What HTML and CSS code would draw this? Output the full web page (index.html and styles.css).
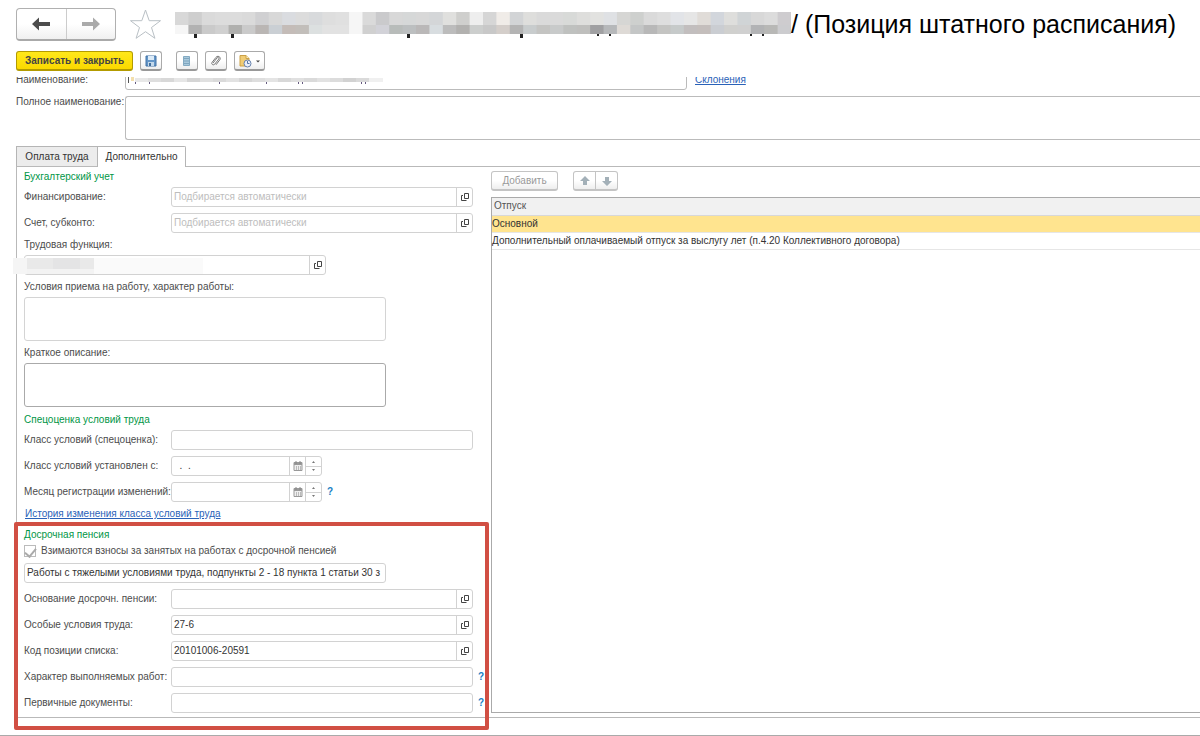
FILE: index.html
```html
<!DOCTYPE html>
<html lang="ru">
<head>
<meta charset="utf-8">
<title>Позиция штатного расписания</title>
<link rel="stylesheet" href="styles.css">
</head>
<body>
<svg class="defs" aria-hidden="true">
  <symbol id="open" viewBox="0 0 10 10"><path d="M4.500 1.500h4v5h-4z" fill="none" stroke="#444"/><path d="M3 3.500H1.500v5h5" fill="none" stroke="#444"/></symbol>
  <symbol id="calendar" viewBox="0 0 10 10"><path d="M1 1.500h8v8H1z" fill="#eee" stroke="#999"/><path d="M1 2h8v2H1z" fill="#999"/><path d="M3 0v3M7 0v3" stroke="#888"/><path d="M3.500 5v4M5.500 5v4M7.500 5v4" stroke="#bbb"/></symbol>
  <symbol id="up" viewBox="0 0 5 3"><path d="M1 3l1.500-2L4 3z" fill="#777"/></symbol>
  <symbol id="down" viewBox="0 0 5 3"><path d="M1 0l1.500 2L4 0z" fill="#777"/></symbol>
</svg>

<header class="header">
  <div class="history">
    <button class="history-btn" type="button" aria-label="Назад"><svg width="20" height="14" viewBox="0 0 20 14"><path d="M1 7l7-6.500v4.500h11v4H8v4.500z" fill="#4c4c4c"/></svg></button>
    <button class="history-btn" type="button" aria-label="Вперед"><svg width="20" height="14" viewBox="0 0 20 14"><path d="M19 7l-7-6.500v4.500H1v4h11v4.500z" fill="#aaa"/></svg></button>
  </div>
  <button class="star" type="button" aria-label="Избранное"><svg width="33" height="32" viewBox="0 0 33 32"><path d="M16.500 2l3.700 10.700H31.500l-9 6.800 3.400 10.800-9.400-6.600-9.400 6.600 3.400-10.800-9-6.800h11.300z" fill="#fff" stroke="#b9c0c5"/></svg></button>
  <svg class="mosaic" id="title-mosaic" width="616" height="30" aria-hidden="true"></svg>
  <h1 class="title">/ (Позиция штатного расписания)</h1>
</header>

<div class="toolbar">
  <button class="btn btn-primary" type="button">Записать и закрыть</button>
  <button class="btn btn-icon" type="button" aria-label="Записать"><svg width="12" height="12" viewBox="0 0 12 12"><path d="M1 1h10v10H1z" fill="#6496c8" stroke="#4272a6"/><path d="M3 1h6v4H3z" fill="#dcebf8"/><path d="M3 7h6v4H3z" fill="#c3d8ea"/><path d="M4 8h2v3H4z" fill="#426f9d"/></svg></button>
  <button class="btn btn-icon gap-before" type="button" aria-label="Список"><svg width="10" height="12" viewBox="0 0 10 12"><path d="M1.500 1.500h6v9h-6z" fill="#a9c9dc" stroke="#83aac2"/><path d="M2 3.500h5M2 6h5M2 8.500h5" stroke="#7fa6bf"/></svg></button>
  <button class="btn btn-icon" type="button" aria-label="Файлы"><svg width="12" height="12" viewBox="0 0 12 12"><path d="M3 8l4-5c1-1.200 2.600 0 1.700 1.200l-4 5c-1.400 1.700-3.900-.2-2.600-1.900L6 2.300C8-.2 11.600 2.400 9.700 5L6 9.800" fill="none" stroke="#777"/></svg></button>
  <button class="btn btn-menu" type="button" aria-label="Создать на основании"><svg width="22" height="14" viewBox="0 0 22 14"><path d="M1 1.500h6l3 3V12H1z" fill="#f1cc74" stroke="#caa047"/><path d="M7 1.500v3h3" fill="#fff2c4" stroke="#caa047"/><circle cx="8.500" cy="9.500" r="3.500" fill="#e9effa" stroke="#6681ac"/><path d="M8.500 7v2.500h2" fill="none" stroke="#5675a5"/><path d="M17 6.500h4l-2 2z" fill="#444"/></svg></button>
</div>

<main>
  <div class="name-row">
    <label class="top-label" for="name">Наименование:</label>
    <div class="name-box">
      <input class="name-input" id="name" type="text">
      <svg class="name-mosaic" id="name-mosaic" width="270" height="9" aria-hidden="true"></svg>
    </div>
    <a class="link" href="#">Склонения</a>
  </div>
  <div class="full-row">
    <label class="top-label" for="full">Полное наименование:</label>
    <textarea class="area area-open" id="full"></textarea>
  </div>

  <div class="tabs" role="tablist">
    <button class="tab" type="button" role="tab" aria-selected="false">Оплата труда</button>
    <button class="tab tab-active" type="button" role="tab" aria-selected="true">Дополнительно</button>
  </div>

  <div class="panel">
    <div class="left">
      <section>
        <h2 class="heading">Бухгалтерский учет</h2>
        <div class="row"><label class="label" for="fin">Финансирование:</label><div class="field"><input id="fin" type="text" placeholder="Подбирается автоматически"><button type="button" aria-label="Открыть"><svg class="ico"><use href="#open"/></svg></button></div></div>
        <div class="row"><label class="label" for="acc">Счет, субконто:</label><div class="field"><input id="acc" type="text" placeholder="Подбирается автоматически"><button type="button" aria-label="Открыть"><svg class="ico"><use href="#open"/></svg></button></div></div>
        <label class="caption" for="func">Трудовая функция:</label>
        <div class="row row-func"><div class="field"><input id="func" type="text"><button type="button" aria-label="Открыть"><svg class="ico"><use href="#open"/></svg></button></div>
          <svg class="func-mosaic" width="190" height="16" aria-hidden="true"><path d="M0 0h190v16H0z" fill="#fafafa"/><path d="M0 0h14v16H0z" fill="#f5f5f5"/><path d="M14 0h67v11H14z" fill="#e9e9e9"/><path d="M40 0h27v11H40z" fill="#e4e4e5"/><path d="M14 11h67v5H14z" fill="#f3f3f3"/></svg>
        </div>
        <label class="caption" for="cond">Условия приема на работу, характер работы:</label>
        <div class="row"><textarea class="area area-light" id="cond"></textarea></div>
        <label class="caption" for="brief">Краткое описание:</label>
        <div class="row"><textarea class="area" id="brief"></textarea></div>
      </section>

      <section>
        <h2 class="heading">Спецоценка условий труда</h2>
        <div class="row"><label class="label" for="cls">Класс условий (спецоценка):</label><div class="field"><input id="cls" type="text"></div></div>
        <div class="row"><label class="label" for="since">Класс условий установлен с:</label><div class="field field-date"><input id="since" type="text" value="  .  ."><button type="button" aria-label="Календарь"><svg class="ico"><use href="#calendar"/></svg></button><span class="spin"><button type="button" aria-label="Больше"><svg class="arr"><use href="#up"/></svg></button><button type="button" aria-label="Меньше"><svg class="arr"><use href="#down"/></svg></button></span></div></div>
        <div class="row"><label class="label" for="month">Месяц регистрации изменений:</label><div class="field field-date"><input id="month" type="text"><button type="button" aria-label="Календарь"><svg class="ico"><use href="#calendar"/></svg></button><span class="spin"><button type="button" aria-label="Больше"><svg class="arr"><use href="#up"/></svg></button><button type="button" aria-label="Меньше"><svg class="arr"><use href="#down"/></svg></button></span></div><button class="help" type="button">?</button></div>
        <a class="link link-history" href="#">История изменения класса условий труда</a>
      </section>

      <section class="pension">
        <h2 class="heading">Досрочная пенсия</h2>
        <div class="check-row"><input class="check" id="fees" type="checkbox" checked disabled><label for="fees">Взимаются взносы за занятых на работах с досрочной пенсией</label></div>
        <div class="row"><div class="field field-work"><input type="text" aria-label="Вид работ" value="Работы с тяжелыми условиями труда, подпункты 2 - 18 пункта 1 статьи 30 з"></div></div>
        <div class="row"><label class="label" for="base">Основание досрочн. пенсии:</label><div class="field"><input id="base" type="text"><button type="button" aria-label="Открыть"><svg class="ico"><use href="#open"/></svg></button></div></div>
        <div class="row"><label class="label" for="spec">Особые условия труда:</label><div class="field"><input id="spec" type="text" value="27-6"><button type="button" aria-label="Открыть"><svg class="ico"><use href="#open"/></svg></button></div></div>
        <div class="row"><label class="label" for="code">Код позиции списка:</label><div class="field"><input id="code" type="text" value="20101006-20591"><button type="button" aria-label="Открыть"><svg class="ico"><use href="#open"/></svg></button></div></div>
        <div class="row"><label class="label" for="kind">Характер выполняемых работ:</label><div class="field"><input id="kind" type="text"></div><button class="help" type="button">?</button></div>
        <div class="row"><label class="label" for="docs">Первичные документы:</label><div class="field"><input id="docs" type="text"></div><button class="help" type="button">?</button></div>
        <div class="frame"></div>
      </section>
    </div>

    <div class="right">
      <div class="commands">
        <button class="btn btn-add" type="button">Добавить</button>
        <div class="move">
          <button type="button" aria-label="Вверх"><svg width="12" height="12" viewBox="0 0 12 12"><path d="M6 1l5 5H8v4H4V6H1z" fill="#a3b0b8"/></svg></button>
          <button type="button" aria-label="Вниз"><svg width="12" height="12" viewBox="0 0 12 12"><path d="M6 11l5-5H8V2H4v4H1z" fill="#a3b0b8"/></svg></button>
        </div>
      </div>
      <div class="grid">
        <table>
          <thead><tr><th>Отпуск</th></tr></thead>
          <tbody>
            <tr class="selected"><td>Основной</td></tr>
            <tr><td>Дополнительный оплачиваемый отпуск за выслугу лет (п.4.20 Коллективного договора)</td></tr>
          </tbody>
        </table>
      </div>
    </div>
  </div>
</main>
<footer class="footer"></footer>
<script src="mosaic.js"></script>
</body>
</html>
```
FILE: styles.css
```css
* { box-sizing: border-box; }
body {
  margin: 0;
  background: #fff;
  color: #4c4c4c;
  font: 10px/12px "Liberation Sans", Arial, sans-serif;
  overflow-x: hidden;
}
button, input, textarea { font: inherit; color: inherit; margin: 0; padding: 0; }
button { background: none; border: 0; }
svg { display: block; flex: none; }
.defs { position: absolute; width: 0; height: 0; }

.header { display: flex; align-items: flex-start; padding: 8px 16px 0; height: 51px; white-space: nowrap; }
.history {
  display: flex;
  flex: none;
  width: 100px;
  height: 33px;
  border: 1px solid #b0b0b0;
  border-bottom: 2px solid #aaa;
  border-radius: 4px;
  background: linear-gradient(#fff 50%, #f0f0f0);
}
.history-btn { flex: 1; display: flex; align-items: center; justify-content: center; }
.history-btn + .history-btn { border-left: 1px solid #ccc; }
.star { margin: 0 13px; }
.mosaic { margin-top: 4px; }
.title { margin: 0; font-size: 25px; line-height: 32px; font-weight: 400; color: #000; }

.toolbar { display: flex; gap: 7px; padding: 0 16px 6px; }
.btn {
  display: flex;
  align-items: center;
  justify-content: center;
  height: 20px;
  border: 1px solid #aaa;
  border-bottom: 2px solid #999;
  border-radius: 3px;
  background: linear-gradient(#fff 50%, #eee);
}
.btn-primary {
  width: 117px;
  border-color: #b39b00;
  background: linear-gradient(#ffe81a, #fbd900);
  color: #444;
  font-weight: 700;
}
.btn-icon { width: 22px; }
.btn-menu { width: 31px; }
.gap-before { margin-left: 7px; }

.top-label { flex: none; width: 109px; }
.name-row {
  display: flex;
  align-items: flex-end;
  height: 13px;
  padding-left: 16px;
  overflow: hidden;
}
.name-row .top-label, .name-row .link { padding-bottom: 4px; }
.name-box { position: relative; width: 562px; margin-right: 8px; }
.name-input { display: block; width: 100%; height: 20px; border: 1px solid #bbb; border-radius: 3px; }
.name-mosaic { position: absolute; left: 2px; bottom: 4px; }
.link { color: #2a62b8; text-decoration: underline; }
.full-row { display: flex; padding: 6px 0 6px 16px; }
.area {
  display: block;
  width: 362px;
  height: 44px;
  resize: none;
  border: 1px solid #aaa;
  border-radius: 3px;
  background: #fff;
}
.area-light { border-color: #d4d4d4; }
.area-open { flex: 1; border-color: #bbb; border-right: 0; border-radius: 3px 0 0 3px; }
.full-row .top-label { white-space: nowrap; }

.tabs { display: flex; padding-left: 16px; }
.tab {
  height: 20px;
  width: 82px;
  border: 1px solid #b5b5b5;
  border-bottom: 0;
  background: #ececec;
  color: #333;
}
.tab-active { width: 89px; margin: 0 0 -1px -1px; height: 21px; padding-bottom: 1px; background: #fff; z-index: 1; border-radius: 0 2px 0 0; }

.panel {
  display: flex;
  margin-left: 16px;
  border: solid #b9b9b9;
  border-width: 1px 0 1px 1px;
  padding-left: 7px;
}
.left { flex: none; width: 459px; padding: 3px 0 0; margin-right: 8px; }
.heading { margin: 0 0 4px; font-size: 10px; line-height: 13px; font-weight: 400; color: #009646; }
.row { display: flex; align-items: center; margin-bottom: 6px; }
.label { flex: none; width: 147px; white-space: nowrap; }
.caption { display: block; margin-bottom: 4px; }
.field {
  display: flex;
  flex: none;
  width: 302px;
  height: 20px;
  border: 1px solid #d2d2d2;
  border-radius: 3px;
  background: #fff;
}
.field input { flex: 1; min-width: 0; padding: 0 2px; border: 0; background: none; color: #333; outline: 0; }
.field input::placeholder { color: #bdbdbd; opacity: 1; }
.field > button { display: flex; align-items: center; justify-content: center; width: 16px; border-left: 1px solid #d2d2d2; }
.ico { width: 10px; height: 10px; }
.field-date { width: 151px; }
.field-date input { white-space: pre; }
.field-work { width: 362px; }
.spin { display: flex; flex-direction: column; width: 16px; border-left: 1px solid #d2d2d2; }
.spin button { flex: 1; display: flex; align-items: center; justify-content: center; }
.spin button + button { border-top: 1px solid #d2d2d2; }
.arr { width: 5px; height: 3px; }
.help { margin-left: 5px; color: #1a80c4; font-weight: 700; }
.row-func { position: relative; }
.func-mosaic { position: absolute; left: -11px; top: 3px; }
.link-history { display: block; width: max-content; margin: 0 0 8px 1px; }
.check-row { display: flex; align-items: center; gap: 5px; height: 12px; margin-bottom: 6px; }
.check { appearance: none; width: 12px; height: 12px; margin: 0; border: 1px solid #bbb; background: #fff; display: grid; place-items: center; }
.check:checked::after { content: ""; width: 5px; height: 9px; margin-bottom: 3px; border: solid #aaa; border-width: 0 2px 2px 0; transform: rotate(40deg); }
.pension { position: relative; }
.pension .row:nth-last-child(2) { margin-bottom: 4px; }
.frame {
  position: absolute;
  inset: -6px -6px -17px -10px;
  border: 4px solid #d14f43;
  border-radius: 2px;
  pointer-events: none;
}

.right { flex: 1; min-width: 0; display: flex; flex-direction: column; padding: 4px 0 4px; }
.commands { display: flex; gap: 15px; margin-bottom: 6px; }
.btn-add { width: 67px; color: #999; border-color: #c4c4c4; }
.move { display: flex; width: 45px; height: 20px; border: 1px solid #c4c4c4; border-bottom-width: 2px; border-radius: 3px; background: linear-gradient(#fff 50%, #eee); }
.move button { flex: 1; display: flex; align-items: center; justify-content: center; }
.move button + button { border-left: 1px solid #c4c4c4; }
.grid { flex: 1; border: solid #aaa; border-width: 1px 0 1px 1px; }
table { width: 100%; border-collapse: collapse; }
th, td { height: 17px; padding: 0; text-align: left; font-weight: 400; border-bottom: 1px solid #e6e6e6; color: #333; }
th { padding-left: 2px; background: #f1f1f1; color: #555; border-bottom-color: #d8d8d8; }
.selected td { background: #ffe48f; }
.footer { margin-top: 17px; border-top: 1px solid #aaa; }
```
FILE: mosaic.js
```js
const NS = "http://www.w3.org/2000/svg";

function rect(svg, x, y, width, height, fill) {
  const node = document.createElementNS(NS, "rect");
  Object.entries({ x, y, width, height, fill }).forEach(([key, value]) => node.setAttribute(key, value));
  svg.append(node);
}

// Concealed part of the object title: two bands of shaded cells.
const titleStrip = document.getElementById("title-mosaic");
const upper = "d8d8d8 cecece dadada dcdcdc dcdcdc dadada d0d0d2 d8d8d8 dadce0 dcdcdc d8dadc dedede e0e0e0 f6f6f6 dadada cacacc d8d8d8 d6d8d8 d8d8d8 d4d6d8 e0e0de cfcfcd eeeeee d6d6d6 f0ece8 d2d4d6 dededc dadada dadada d8dad8 dededc e2e2e0 dfe1e4 d6d6d4 ced0ce dadada dedede e2e4e8 e6e6e6 e0dcd8 d2d6dc dededc d0d4d6 d8d8d8 dcdcdc cecccf".split(" ");
const lower = "f6f6f6 b2b2b2 cacaca d0d0d0 b0b0ae cacaca bab6b4 cacfd4 c4bcb8 c2beba dce0e0 e2e2e2 e2e2e2 f6f6f6 d0d0d0 d2d2d8 b8bcba bcbfc0 bab8b8 d8dde0 bcbcbc b2b1af cccecd c8c8c8 d4ceca b4b4b4 c8cccd c4c4c2 c8caca bfc1bf bfbfbd a0a0a2 b6b8ba dedad6 c4c6c6 b8b8b8 c4c4c2 c6caca c2bebe c4bebc cacdd2 d0d0ce d0d0d0 b2b3b5 b8b8b6 cccccf".split(" ");
const step = 616 / upper.length;
upper.forEach((shade, i) => rect(titleStrip, i * step, 0, step + 1, 13, "#" + shade));
lower.forEach((shade, i) => rect(titleStrip, i * step, 13, step + 1, 9, "#" + shade));
[19, 56, 232, 345].forEach(x => rect(titleStrip, x, 22, 3, 4, "#222"));
[422, 434, 575, 587].forEach(x => rect(titleStrip, x, 22, 2, 2, "#222"));

// Concealed part of the name field.
const nameStrip = document.getElementById("name-mosaic");
rect(nameStrip, 1, 0, 1, 6, "#555");
rect(nameStrip, 4, 0, 3, 4, "#f3dfac");
["e8e8e8", "dedede", "d8d8d8", "e6e6e6", "d5d5d5", "e0e0e0", "dadada", "e2e2e2", "d6d6d6", "dedede", "e4e4e4", "d8d8d8", "e0e0e0", "dadada", "e2e2e2", "dcdcdc", "d2d2d2", "dadada", "f0f0f0"]
  .forEach((shade, i) => rect(nameStrip, 8 + i * 13, 1, 14, 4, "#" + shade));
[8, 22, 92, 139, 171, 175, 234, 238].forEach(x => rect(nameStrip, x, 5, 1, 2, "#665a80"));
```
